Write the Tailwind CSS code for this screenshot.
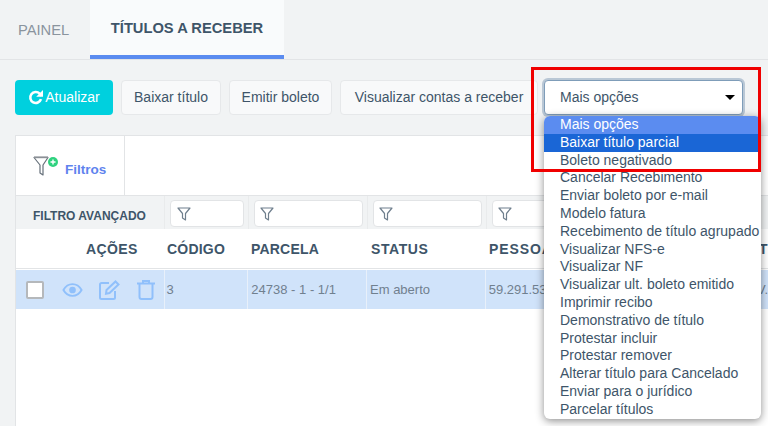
<!DOCTYPE html>
<html lang="en">
<head>
  <meta charset="UTF-8" />
  <title>Títulos a receber</title>
  <script src="https://cdn.jsdelivr.net/npm/@tailwindcss/browser@4"></script>
</head>
<body class="relative h-[426px] w-[768px] overflow-hidden bg-[#f1f3f4] font-['Liberation_Sans',Arial,sans-serif] text-[#3e5569]">
  <!-- tabs -->
  <nav class="flex h-[60px] border-b border-[#e2e4e6]">
    <div class="flex h-[59px] w-[90px] items-center pl-[18px] pt-[1px] text-[14.7px] text-[#8a949e]">PAINEL</div>
    <div class="flex h-[59px] w-[194px] items-center justify-center border-b-4 border-[#5b8cf0] bg-[#f9fbfc] pt-[2px] text-[14.7px] font-bold">TÍTULOS A RECEBER</div>
  </nav>

  <!-- toolbar -->
  <div class="mt-[20px] flex h-[35px] gap-2 pl-[15px] text-[14px]">
    <button class="flex w-[98px] items-center justify-center gap-[1px] rounded bg-[#00d0de] text-white">
      <svg class="-mt-[2px]" width="16" height="16" viewBox="0 0 16 16" fill="none" stroke="#fff" stroke-width="2.6"><path d="M13 10.200a5.500 5.500 0 1 1-1.300-5.600L13.500 6.500"/><path d="M15 1v6.800H8.200z" fill="#fff" stroke="none"/></svg>
      Atualizar
    </button>
    <button class="w-[100px] rounded border border-[#e6e8ea] bg-[#f8f9fa]">Baixar título</button>
    <button class="w-[103px] rounded border border-[#e6e8ea] bg-[#f8f9fa]">Emitir boleto</button>
    <button class="w-[198px] rounded border border-[#e6e8ea] bg-[#f8f9fa]">Visualizar contas a receber</button>
  </div>

  <!-- panel -->
  <section class="ml-[15px] mt-[20px] h-[300px] w-[753px] overflow-hidden border-l border-t border-[#e2e4e6] bg-white">
    <div class="flex h-[60px] border-b border-[#e2e4e6]">
      <div class="flex w-[109px] items-center border-r border-[#e2e4e6] pl-[17px]">
        <svg width="26" height="20" viewBox="0 0 26 20" fill="none">
          <path d="M1 1.500h14l-5 7.500v10l-3-2V9z" stroke="#66707a" stroke-width="1.200" stroke-linejoin="round"/>
          <path d="M1 1.300h14" stroke="#8b9096" stroke-width="1.800"/>
          <circle cx="20" cy="6" r="5" fill="#2fd27f"/>
          <path d="M17.500 6h5M20 3.500v5" stroke="#fff" stroke-width="1.400"/>
        </svg>
        <span class="ml-[6px] mt-[10px] text-[13.5px] font-bold text-[#5f83ee]">Filtros</span>
      </div>
    </div>
    <!-- filter row -->
    <div class="flex h-[33px] bg-[#f1f3f4] text-[12px] font-bold">
      <div class="flex w-[149px] items-center border-r border-[#e9ebec] pl-[17px] pt-[7px]">FILTRO AVANÇADO</div>
      <div class="w-[84px] border-r border-[#e9ebec] pl-[5px] pt-[4px]">
        <div class="flex h-[27px] w-[74px] rounded border border-[#e2e4e6] bg-white pl-[6px] pt-[6px]">
          <svg width="14" height="14" viewBox="0 0 14 14" fill="none" stroke="#6f7f8d" stroke-width="1.200" stroke-linejoin="round"><path d="M1 1h12L8.500 6.500V13L5.500 11V6.500z"/></svg>
        </div>
      </div>
      <div class="w-[119px] border-r border-[#e9ebec] pl-[5px] pt-[4px]">
        <div class="flex h-[27px] w-[109px] rounded border border-[#e2e4e6] bg-white pl-[5px] pt-[6px]">
          <svg width="14" height="14" viewBox="0 0 14 14" fill="none" stroke="#6f7f8d" stroke-width="1.200" stroke-linejoin="round"><path d="M1 1h12L8.500 6.500V13L5.500 11V6.500z"/></svg>
        </div>
      </div>
      <div class="w-[119px] border-r border-[#e9ebec] pl-[5px] pt-[4px]">
        <div class="flex h-[27px] w-[109px] rounded border border-[#e2e4e6] bg-white pl-[5px] pt-[6px]">
          <svg width="14" height="14" viewBox="0 0 14 14" fill="none" stroke="#6f7f8d" stroke-width="1.200" stroke-linejoin="round"><path d="M1 1h12L8.500 6.500V13L5.500 11V6.500z"/></svg>
        </div>
      </div>
      <div class="pl-[5px] pt-[4px]">
        <div class="flex h-[27px] w-[109px] rounded border border-[#e2e4e6] bg-white pl-[5px] pt-[6px]">
          <svg width="14" height="14" viewBox="0 0 14 14" fill="none" stroke="#6f7f8d" stroke-width="1.200" stroke-linejoin="round"><path d="M1 1h12L8.500 6.500V13L5.500 11V6.500z"/></svg>
        </div>
      </div>
    </div>
    <!-- header row -->
    <div class="flex h-[40px] items-center border-b border-[#e2e4e6] pt-[2px] text-[14px] font-bold">
      <div class="w-[149px] pl-[70px] tracking-[0.4px]">AÇÕES</div>
      <div class="w-[84px] pl-[2px] tracking-[0.2px]">CÓDIGO</div>
      <div class="w-[119px] pl-[2px] tracking-[0.2px]">PARCELA</div>
      <div class="w-[119px] pl-[3px] tracking-[0.6px]">STATUS</div>
      <div class="w-[272px] pl-[2px] tracking-[0.9px]">PESSOA</div>
      <div>T</div>
    </div>
    <!-- data row -->
    <div class="mt-[1px] flex h-[39px] items-center bg-[#d0e3fa] text-[13px] text-[#70808f]">
      <div class="flex h-full w-[149px] items-center border-r border-[#e8f0fa] pl-[10px]">
        <span class="h-[18px] w-[18px] rounded-[2px] border-2 border-[#b5b8bb] bg-white"></span>
        <svg class="ml-[18px]" width="21" height="18" viewBox="0 0 22 18" fill="none" stroke="#90c0fb" stroke-width="2"><path d="M1.500 9C4 4.500 7.500 2.800 11 2.800S18 4.500 20.500 9C18 13.500 14.500 15.200 11 15.200S4 13.500 1.500 9z"/><circle cx="11" cy="9" r="3.500" fill="#90c0fb" stroke="none"/></svg>
        <svg class="ml-[16px]" width="21" height="20" viewBox="0 0 21 20" fill="none" stroke="#90c0fb" stroke-width="2"><path d="M10 3H2.500A1.500 1.500 0 0 0 1 4.500v13A1.500 1.500 0 0 0 2.500 19h12a1.500 1.500 0 0 0 1.500-1.500V11"/><path d="M7.500 10 16.500 1.500l3 3-9 8.500-3.500.7z"/></svg>
        <svg class="ml-[16px]" width="20" height="21" viewBox="0 0 20 21" fill="none" stroke="#90c0fb" stroke-width="2"><path d="M1 4.500h18M7 4.500V2h6v2.500M3.500 4.500V18A2 2 0 0 0 5.500 20h9a2 2 0 0 0 2-2V4.500"/></svg>
      </div>
      <div class="flex h-full w-[84px] items-center border-r border-[#e8f0fa] pl-[2px]">3</div>
      <div class="flex h-full w-[119px] items-center border-r border-[#e8f0fa] pl-[3px]">24738 - 1 - 1/1</div>
      <div class="flex h-full w-[119px] items-center border-r border-[#e8f0fa] pl-[3px]">Em aberto</div>
      <div class="flex h-full w-[272px] items-center pl-[3px]">59.291.53</div>
      <div>V.</div>
    </div>
  </section>

  <!-- opened select -->
  <div class="absolute left-[544px] top-[80px] flex h-[35px] w-[199px] items-center justify-between rounded border border-[#7f9db9] bg-white pl-[15px] pr-[7px] text-[14px] shadow-[0_0_0_2px_#b9c7d5]">
    Mais opções
    <span class="h-0 w-0 border-x-[5.5px] border-t-[5px] border-x-transparent border-t-black"></span>
  </div>
  <ul class="absolute left-[544px] top-[116px] h-[303px] w-[217px] overflow-hidden rounded-md bg-white text-[14px] leading-[17.8px] shadow-[0_2px_8px_rgba(0,0,0,0.45)]">
    <li class="bg-[#5b8cf0] pl-[16px] text-white">Mais opções</li>
    <li class="bg-[#1a66d6] pl-[16px] text-white">Baixar título parcial</li>
    <li class="pl-[16px]">Boleto negativado</li>
    <li class="pl-[16px]">Cancelar Recebimento</li>
    <li class="pl-[16px]">Enviar boleto por e-mail</li>
    <li class="pl-[16px]">Modelo fatura</li>
    <li class="pl-[16px]">Recebimento de título agrupado</li>
    <li class="pl-[16px]">Visualizar NFS-e</li>
    <li class="pl-[16px]">Visualizar NF</li>
    <li class="pl-[16px]">Visualizar ult. boleto emitido</li>
    <li class="pl-[16px]">Imprimir recibo</li>
    <li class="pl-[16px]">Demonstrativo de título</li>
    <li class="pl-[16px]">Protestar incluir</li>
    <li class="pl-[16px]">Protestar remover</li>
    <li class="pl-[16px]">Alterar título para Cancelado</li>
    <li class="pl-[16px]">Enviar para o jurídico</li>
    <li class="pl-[16px]">Parcelar títulos</li>
  </ul>

  <!-- annotation -->
  <div class="pointer-events-none absolute left-[531px] top-[67px] h-[105px] w-[230px] border-[3px] border-[#f00000]"></div>
</body>
</html>
